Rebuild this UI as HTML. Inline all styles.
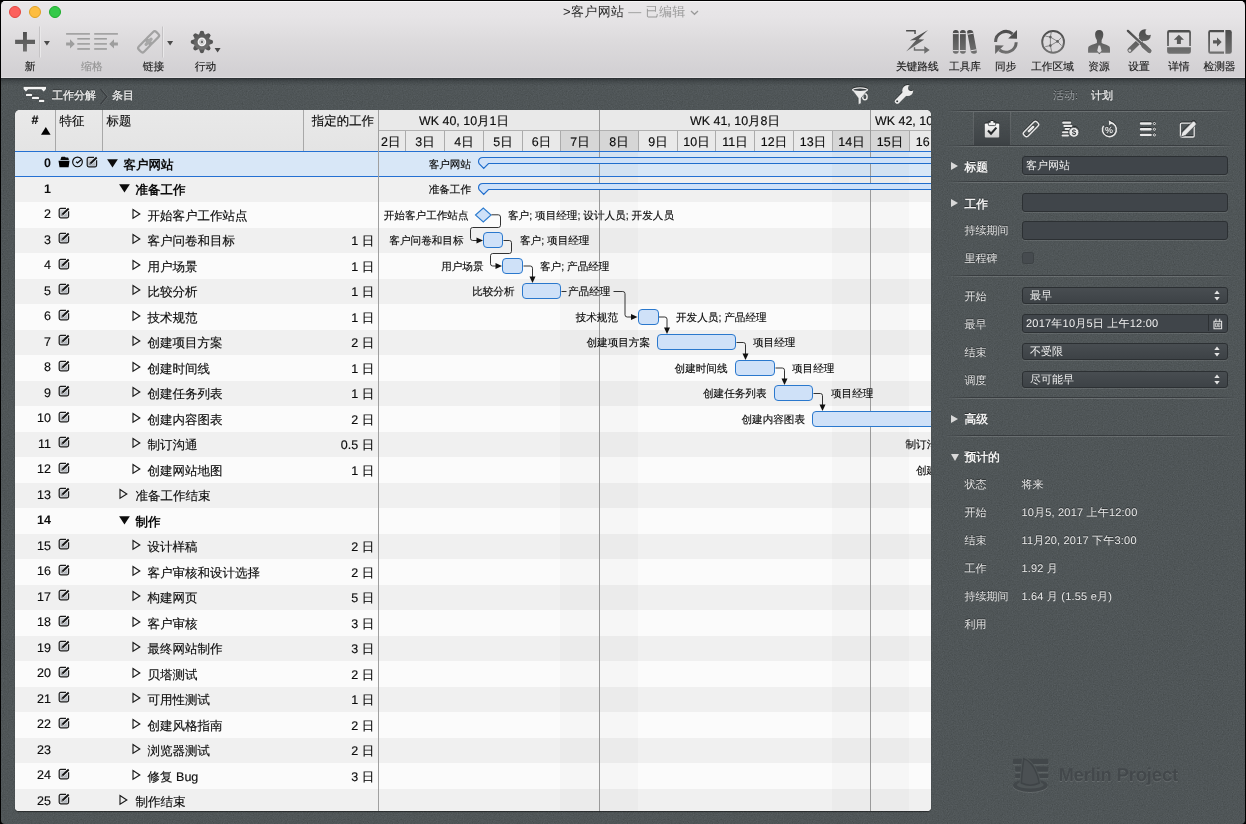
<!DOCTYPE html>
<html lang="zh"><head><meta charset="utf-8"><title>客户网站</title>
<style>
*{box-sizing:border-box;margin:0;padding:0}
html,body{width:1246px;height:824px;overflow:hidden;background:#000;font-family:"Liberation Sans",sans-serif;text-rendering:geometricPrecision;}
body{position:relative}
#win{position:absolute;left:1px;top:1px;width:1244px;height:823px;border-radius:4.5px 4.5px 4px 4px;overflow:hidden;background:#4f5557;}
#chrome{position:absolute;left:0;top:0;width:1244px;height:77px;background:linear-gradient(#e9e7e9 0%,#e6e4e6 22%,#dcdadc 55%,#d3d1d4 92%,#d3d1d4 100%);border-bottom:1px solid #dfdde0;box-shadow:inset 0 1px 0 #f6f5f6;}
#chromeline{position:absolute;left:0;top:77px;width:1244px;height:8px;background:linear-gradient(rgba(30,34,37,.8) 0,rgba(35,40,43,.55) 16%,rgba(40,45,48,.28) 45%,rgba(48,52,55,0) 100%)}
.tl{position:absolute;top:4px;width:12px;height:12px;border-radius:50%;}
#title{position:absolute;left:0;top:2.4px;letter-spacing:.35px;width:1244px;text-align:center;font-size:13px;color:#2b2b2b;white-space:nowrap;line-height:18px}
#title .ed{color:#9a9a9a}
.tb{position:absolute;top:0;font-size:10.7px;color:#2e2e2e;white-space:nowrap;text-align:center;line-height:12px}
.tb.dis{color:#9a9a9a}
.tbl{position:absolute;top:59px;transform:translateX(-50%);font-size:10.7px;color:#222;-webkit-text-stroke:.15px #222;white-space:nowrap;line-height:14px}
.tbl.dis{color:#939393;-webkit-text-stroke:.15px #939393}
.tbi{position:absolute}
.vdiv{position:absolute;top:26px;width:2px;height:30px;background:linear-gradient(90deg,#bdbbbd 50%,#efeeef 50%)}
.dd{position:absolute;width:0;height:0;border-left:3px solid transparent;border-right:3px solid transparent;border-top:5px solid #444}
/* crumbs */
#crumbs{position:absolute;left:0;top:78px;width:931px;height:31px;color:#f2f2f2;font-size:11px;text-shadow:0 -1px 0 rgba(0,0,0,.5)}
#crumbs span{position:absolute;top:9.7px;-webkit-text-stroke:.25px #f2f2f2;line-height:14px;white-space:nowrap}
/* panel */
#panel{position:absolute;left:14px;top:109px;width:916px;height:701px;background:#fafafa;border-radius:5px 5px 4px 4px;overflow:hidden;box-shadow:0 1px 1px rgba(0,0,0,.5)}
.rb{position:absolute;left:0;width:916px}
.rb.odd{background:#f0f0f0}
.rb.even{background:#fbfbfb}
.rb.sel{background:#d8e7f7;border-top:1px solid #2470d2;border-bottom:1px solid #2470d2}
#outline{position:absolute;left:0;top:0;width:364px;height:701px;border-right:1px solid #9f9f9f;}
.hdr{position:absolute;left:0;top:0;width:363px;height:41px;background:linear-gradient(#e9e9e9,#e4e4e4)}
.hc{position:absolute;top:0;height:41px;border-right:1px solid #a8a8a8;font-size:12.44px;color:#111}
.hc span{position:absolute;white-space:nowrap;line-height:16px;color:#0c0c0c;-webkit-text-stroke:.15px #0c0c0c}
.sortup{position:absolute;left:25.8px;top:17.5px;width:0;height:0;border-left:4.8px solid transparent;border-right:4.8px solid transparent;border-bottom:7.7px solid #000}
.row{position:absolute;left:0;width:363px;font-size:12.5px;color:#0c0c0c;white-space:nowrap;-webkit-text-stroke:.15px #0c0c0c}
.row.b{font-weight:bold;-webkit-text-stroke:0}
.row span{position:absolute;top:5px;line-height:16px}
.row .num{right:327px;text-align:right;top:3.7px}
.row .wk{right:3.8px;text-align:right;top:5px}
.row .ic{position:absolute;top:4.4px}
.tri-d{position:absolute;top:8px;width:0;height:0;border-left:4.7px solid transparent;border-right:4.7px solid transparent;border-top:7.8px solid #111}
.tri-r{position:absolute;top:5.3px}
.tri-dd{position:absolute;top:7.2px}
/* gantt */
#gantt{position:absolute;left:364px;top:0;width:552px;height:701px;overflow:hidden}
#gantt .wkrow{position:absolute;left:0;top:0;width:553px;height:21px;background:#e9e9e9;border-bottom:1px solid #b0b0b0;font-size:12.44px;color:#111}
#gantt .dayrow{position:absolute;left:0;top:21px;width:553px;height:20px;background:#e9e9e9;font-size:12.44px;color:#111}
#gantt .wkrow span,#gantt .dayrow span{position:absolute;top:2.5px;line-height:16px;white-space:nowrap;color:#0c0c0c;-webkit-text-stroke:.15px #0c0c0c}
.dc{position:absolute;top:0;height:20px;border-left:1px solid #ababab}
.dc.we{background:#d6d6d6}
.wshade{position:absolute;top:41px;height:660px;background:rgba(0,0,0,.021)}
.wline{position:absolute;top:0;width:1px;height:701px;background:#9a9a9a}
.gl{position:absolute;font-size:10.6px;color:#0c0c0c;-webkit-text-stroke:.15px #0c0c0c;white-space:nowrap;line-height:14px}
.gl.r{text-align:right;transform:translateX(-100%)}
.bar{position:absolute;height:16px;background:#cfe1f8;border:1px solid #2a78cd;border-radius:4px}
#gsvg{position:absolute;left:0;top:0}
/* inspector */
#insp{position:absolute;left:931px;top:78px;width:313px;height:745px;color:#e8e8e8;font-size:11px}
#insp .lb{position:absolute;left:32.4px;line-height:14px;white-space:nowrap;color:#e4e4e4;text-shadow:0 -1px 0 rgba(0,0,0,.45)}
#insp .lb.h{font-weight:bold;font-size:11.8px;color:#f2f2f2}
#insp .val{position:absolute;left:89.4px;letter-spacing:.2px;line-height:14px;white-space:nowrap;color:#e9e9e9;text-shadow:0 -1px 0 rgba(0,0,0,.45)}
#insp .sep{position:absolute;left:13px;width:292px;height:1px;background:linear-gradient(90deg,rgba(56,60,63,0),#383c3f 9%,#383c3f 91%,rgba(56,60,63,0))}
#insp .sep:after{content:'';position:absolute;left:0;top:1px;width:292px;height:1px;background:linear-gradient(90deg,rgba(255,255,255,0),rgba(255,255,255,.15) 9%,rgba(255,255,255,.15) 91%,rgba(255,255,255,0))}
#insp .fld{position:absolute;left:90px;width:206px;height:18.5px;background:#40454a;border:1px solid #2c3033;border-radius:3px;box-shadow:0 1px 0 rgba(255,255,255,.1);font-size:11px;color:#f0f0f0;line-height:18.5px;padding-left:3px;white-space:nowrap}
#insp .fld.selb{padding-left:7px;background:linear-gradient(#484d51,#3d4246);height:17.2px;line-height:16.4px}
.tr-r{position:absolute;left:19px;width:0;height:0;border-top:4px solid transparent;border-bottom:4px solid transparent;border-left:7px solid #d9d9d9}
.tr-d{position:absolute;left:19px;width:0;height:0;border-left:4.5px solid transparent;border-right:4.5px solid transparent;border-top:7px solid #d9d9d9}
.stp{position:absolute;right:7.5px;top:2.3px}

#noise{position:absolute;left:0;top:77px;width:1244px;height:746px;opacity:.14;mix-blend-mode:overlay;pointer-events:none}

</style></head>
<body>
<svg width="0" height="0" style="position:absolute">
<defs>
<linearGradient id="gdk" gradientUnits="userSpaceOnUse" x1="0" y1="29" x2="0" y2="55"><stop offset="0" stop-color="#4a4a4a"/><stop offset="1" stop-color="#747474"/></linearGradient>
<linearGradient id="gdk2" gradientUnits="userSpaceOnUse" x1="0" y1="-12" x2="0" y2="12"><stop offset="0" stop-color="#515151"/><stop offset="1" stop-color="#7a7a7a"/></linearGradient>
<linearGradient id="glt" x1="0" y1="0" x2="0" y2="1"><stop offset="0" stop-color="#9a9a9a"/><stop offset="1" stop-color="#b4b4b4"/></linearGradient>
<linearGradient id="gclip" x1="0" y1="0" x2="0" y2="1"><stop offset="0" stop-color="#fbfbfb"/><stop offset="1" stop-color="#cfcfcf"/></linearGradient>
<linearGradient id="ged" x1="0" y1="0" x2="0" y2="1"><stop offset="0" stop-color="#d6d8db"/><stop offset="1" stop-color="#a9aeb5"/></linearGradient>
<symbol id="i-edit" viewBox="0 0 13 13">
<path d="M2.2 2.4h5.6L3.6 7.2l-.6 2.2 2.3-.6L9.6 4.4v5.4H2.2z" fill="url(#ged)"/>
<path d="M8 1.4H2.7a1.5 1.5 0 0 0-1.5 1.5v6.4a1.5 1.5 0 0 0 1.5 1.5h6.4a1.5 1.5 0 0 0 1.5-1.5V4.3" fill="none" stroke="#1a1a1a" stroke-width="1.2"/>
<path d="M4.4 7.5 L10.7 1.5" stroke="#111" stroke-width="1.85" fill="none"/><path d="M3.3 8.7l.5-1.7 1.3 1.3z" fill="#111"/>
</symbol>
<symbol id="i-folder" viewBox="0 0 13 13">
<path d="M2.4 3.9 L3.3 1.1 Q3.5 .7 4 .7 L7 .7 L7.7 1.5 L9.8 1.5 Q10.3 1.5 10.4 2 L10.9 3.9 Z" fill="#0a0a0a"/>
<path d="M0.5 4.8 L11.5 4.8 L10.6 11.3 L1.5 11.3 Z" fill="#000"/>
</symbol>
<symbol id="i-clock" viewBox="0 0 13 13">
<circle cx="6.5" cy="5.9" r="4.85" fill="none" stroke="#0c0c0c" stroke-width="1.15"/>
<path d="M5.1 5.8 L6.5 7 L9.9 3.9" fill="none" stroke="#0c0c0c" stroke-width="1.3"/>
</symbol>
<symbol id="t-clip" viewBox="0 0 20 20"><rect x="2.8" y="4.6" width="14.4" height="14" rx="1" fill="url(#gclip)"/><rect x="6.4" y="3.4" width="7.2" height="3.2" rx=".8" fill="#eee" stroke="#454a4d" stroke-width=".9"/><rect x="8.5" y="1.9" width="3" height="2.4" rx=".9" fill="#eee"/><path d="M6 11.6 L9 14.6 L14.4 8.6" fill="none" stroke="#26292b" stroke-width="2.1"/></symbol>
<symbol id="t-link" viewBox="0 0 20 20"><g transform="translate(10 10) rotate(-45)" fill="none" stroke="#e8e8e8" stroke-width="1.45"><rect x="-9.2" y="-2.9" width="18.4" height="5.8" rx="2.2"/><path d="M-3 0h6" stroke-width="2.4" stroke-linecap="round"/></g></symbol>
<symbol id="t-cost" viewBox="0 0 20 20"><g fill="#e8e8e8"><rect x="2.2" y="2.6" width="9" height="2.1" rx="1"/><rect x="3.4" y="5.8" width="9" height="2.1" rx="1"/><rect x="4.6" y="9" width="5.6" height="2.1" rx="1"/><rect x="2" y="12.2" width="6.6" height="2.1" rx="1"/><rect x="1.6" y="15.4" width="7.4" height="2.1" rx="1"/><circle cx="13.9" cy="13.3" r="5" stroke="#4c5154" stroke-width=".9"/></g><text x="13.9" y="16.3" font-family="Liberation Sans" font-size="8" font-weight="bold" text-anchor="middle" fill="#3a3e41">$</text></symbol>
<symbol id="t-pct" viewBox="0 0 20 20"><path d="M11.2 3.6 A7 7 0 1 1 4.6 6.6" fill="none" stroke="#e8e8e8" stroke-width="1.6"/><path d="M9.8 1.2 L13.6 3.5 L10.2 6.2z" fill="#e8e8e8"/><text x="10.1" y="13.9" font-family="Liberation Sans" font-size="9" font-weight="bold" text-anchor="middle" fill="#e8e8e8">%</text></symbol>
<symbol id="t-list" viewBox="0 0 20 20"><g fill="#e8e8e8"><rect x="1.8" y="3.3" width="12" height="2.4" rx="1.1"/><rect x="1.8" y="9" width="12" height="2.4" rx="1.1"/><rect x="1.8" y="14.7" width="12" height="2.4" rx="1.1"/></g><g fill="none" stroke="#e8e8e8" stroke-width=".9"><circle cx="16.4" cy="4.5" r="1.1"/><circle cx="16.4" cy="10.2" r="1.1"/><circle cx="16.4" cy="15.9" r="1.1"/></g></symbol>
<symbol id="t-note" viewBox="0 0 20 20"><rect x="3.4" y="4.2" width="13.8" height="13.8" rx="1.2" fill="none" stroke="#e8e8e8" stroke-width="1.3"/><path d="M3.6 18.2 L5.2 13.2 L15.8 2.6 Q16.6 2 17.4 2.6 L19 4.2 Q19.6 5 19 5.8 L8.4 16.4 Z" fill="#e8e8e8" stroke="#4c5154" stroke-width=".8"/></symbol>
</defs>
</svg>
<div id="win">
<svg id="noise" width="1244" height="746"><filter id="nf" color-interpolation-filters="sRGB" x="0" y="0" width="100%" height="100%"><feTurbulence type="fractalNoise" baseFrequency="0.8" numOctaves="2" seed="7"/><feColorMatrix type="matrix" values="0.6 0.6 0.6 0 -0.4  0.6 0.6 0.6 0 -0.4  0.6 0.6 0.6 0 -0.4  0 0 0 0 1"/></filter><rect width="1244" height="746" filter="url(#nf)"/></svg>
<div id="chrome">
<div class="tl" style="left:8px;top:5px;background:#fc615d;border:1px solid #e24640"></div>
<div class="tl" style="left:28px;top:5px;background:#fdbd41;border:1px solid #dfa023"></div>
<div class="tl" style="left:48px;top:5px;background:#35c94a;border:1px solid #1dac2b"></div>
<div id="title"><span style="position:absolute;left:562px;top:0">&gt;客户网站 <span class="ed">— 已编辑</span></span>
<svg style="position:absolute;left:688.6px;top:7px" width="9" height="6"><path d="M1 1 L4.5 4.3 L8 1" fill="none" stroke="#9a9a9a" stroke-width="1.3"/></svg></div>
<span class="tbl" style="left:29px">新</span>
<span class="tbl dis" style="left:91px">缩格</span>
<span class="tbl" style="left:152.5px">链接</span>
<span class="tbl" style="left:204.5px">行动</span>
<span class="tbl" style="left:916.3px">关键路线</span>
<span class="tbl" style="left:964px">工具库</span>
<span class="tbl" style="left:1004.8px">同步</span>
<span class="tbl" style="left:1051.5px">工作区域</span>
<span class="tbl" style="left:1097.9px">资源</span>
<span class="tbl" style="left:1138px">设置</span>
<span class="tbl" style="left:1178px">详情</span>
<span class="tbl" style="left:1218.5px">检测器</span>
<!-- all toolbar icons, drawn in page coordinates -->
<svg id="tbsvg" style="position:absolute;left:-1px;top:-1px" width="1246" height="78">
<g fill="url(#gdk)">
<!-- plus -->
<path d="M23 32.1h3.9v7.7h8.1v4.1h-8.1v7.7h-3.9v-7.7h-7.9v-4.1h7.9z"/>
<!-- dropdown arrows -->
<path d="M43.9 41h6l-3 4.5z M167.1 41h6l-3 4.5z M214.6 47.9h6l-3 4.5z" fill="#4a4a4a"/>
</g>
<!-- dividers -->
<rect x="39" y="26.5" width="1" height="31" fill="#c5c3c5"/><rect x="40" y="26.5" width="1" height="31" fill="#e9e8e9"/>
<rect x="162" y="26.5" width="1" height="31" fill="#c5c3c5"/><rect x="163" y="26.5" width="1" height="31" fill="#e9e8e9"/>
<!-- indent / outdent (disabled) -->
<g fill="#9e9e9e">
<rect x="66.1" y="33.1" width="23.8" height="1.6"/><rect x="77.3" y="38" width="12.6" height="1.6"/><rect x="77.3" y="43.1" width="12.6" height="1.6"/><rect x="77.3" y="48.1" width="12.6" height="1.7"/>
<path d="M66.1 42.5h3.9v-3.3l4.8 4.7-4.8 4.7v-3.2h-3.9z"/>
<rect x="94.2" y="33.1" width="23.7" height="1.6"/><rect x="94.2" y="38" width="12.7" height="1.6"/><rect x="94.2" y="43.1" width="12.7" height="1.6"/><rect x="94.2" y="48.1" width="12.7" height="1.7"/>
<path d="M117.9 42.5h-3.9v-3.3l-4.8 4.7 4.8 4.7v-3.2h3.9z"/>
</g>
<!-- link -->
<g transform="translate(148.6 41.8) rotate(-45.5)" fill="none" stroke="#a2a2a2" stroke-width="2.2">
<rect x="-12.4" y="-3.7" width="13.4" height="7.4" rx="2.2"/><rect x="-1" y="-3.7" width="13.4" height="7.4" rx="2.2"/>
<path d="M-3.6 0h7.2" stroke-width="3.2" stroke-linecap="round" stroke="#a8a8a8"/></g>
<!-- gear -->
<g transform="translate(201.9 41.9)" fill="url(#gdk2)">
<g id="tooth"><path d="M-3 -6.8 L-1.7 -10.6 Q0 -11.9 1.7 -10.6 L3 -6.8 Z"/></g>
<use href="#tooth" transform="rotate(45)"/><use href="#tooth" transform="rotate(90)"/><use href="#tooth" transform="rotate(135)"/><use href="#tooth" transform="rotate(180)"/><use href="#tooth" transform="rotate(225)"/><use href="#tooth" transform="rotate(270)"/><use href="#tooth" transform="rotate(315)"/>
<circle r="7.9"/><circle r="4.3" fill="#f3f2f3"/><circle r="2.4" fill="none" stroke="#b5b5b5" stroke-width=".8"/><circle r="1.3" fill="#6a6a6a"/></g>

<!-- critical path -->
<g fill="url(#gdk)">
<path d="M906.1 30.1h9.7v4h-1.5v-2.5h-8.2z"/>
<path d="M928 30.1 L909.8 40.5 L916.2 40 L906.1 51.6 L924.3 39.5 L918.5 39.2 Z"/>
<path d="M913.8 47.3h1.4v2h9.1v-3l5.4 3.7-5.4 3.7v-2.9h-10.5z"/>
</g>
<!-- library -->
<g fill="url(#gdk)">
<rect x="952.9" y="30.1" width="5.8" height="23.6" rx="2.6"/><rect x="960" y="30.1" width="5.8" height="23.6" rx="2.6"/>
<path d="M967.2 32.3 Q966.8 30.4 969.5 30.1 Q972.6 29.9 973.1 31.8 L976.8 51.4 Q977.2 53.4 974.4 53.7 Q971.4 54 970.9 52 Z"/></g>
<g stroke="#e4e2e4" stroke-width="1" fill="none"><path d="M952.9 33.6h5.8 M960 33.6h5.8 M952.9 50.6h5.8 M960 50.6h5.8 M967.6 34.2l5.9-1 M970.6 50.8l5.9-1"/></g>
<!-- sync -->
<g fill="none" stroke="url(#gdk)" stroke-width="3">
<path d="M995.6 41.9 A10.3 10.3 0 0 1 1012.5 33.9"/>
<path d="M1016.2 42.2 A10.3 10.3 0 0 1 999.5 50"/></g>
<path d="M1017 30.1v8.7l-8.8-.3z" fill="#4e4e4e"/><path d="M995.1 54v-8.8l8.7.4z" fill="#676767"/>
<!-- workspace -->
<circle cx="1053.1" cy="41.9" r="10.9" fill="none" stroke="url(#gdk)" stroke-width="1.9"/>
<g stroke="#707070" stroke-width=".8" fill="none"><path d="M1050.4 37.1 L1057.5 41.4 L1050.4 45.6 Z M1050.4 37.1 L1051.4 31.4 M1050.4 37.1 L1045.3 36.1 M1057.5 41.4 L1061.5 37.5 M1057.5 41.4 L1061.5 45.6 M1050.4 45.6 L1045.3 46.6 M1050.4 45.6 L1051.7 52"/></g>
<g fill="#5e5e5e"><circle cx="1050.4" cy="37.1" r="1.3"/><circle cx="1057.5" cy="41.4" r="1.3"/><circle cx="1050.4" cy="45.6" r="1.3"/></g>
<!-- resource person -->
<path d="M1099.2 29.9 C1102 29.9 1103.4 31.8 1103.3 34.6 C1103.2 37.4 1102.2 39 1101.6 40.2 L1101.6 43 C1104.5 44.2 1108.4 45.4 1109.4 46.6 C1110.2 47.6 1110 50.5 1110 52.7 L1088.1 52.7 C1088.1 50.5 1087.9 47.6 1088.7 46.6 C1089.7 45.4 1093.6 44.2 1096.9 43 L1096.9 40.2 C1096.2 39 1095.2 37.4 1095.1 34.6 C1095 31.8 1096.4 29.9 1099.2 29.9 Z" fill="url(#gdk)"/>
<path d="M1098.5 45.6h1.7l1.4 5.1-2.2 2.5-2.2-2.5z" fill="#dcdadc"/><path d="M1097.9 52.7h2.9l-1.45 1.6z" fill="#555"/>
<!-- settings tools -->
<mask id="wm" maskUnits="userSpaceOnUse" x="1120" y="25" width="40" height="35"><rect x="1120" y="25" width="40" height="35" fill="#fff"/><circle cx="1148.7" cy="32" r="3.3" fill="#000"/><circle cx="1129.8" cy="50.4" r="1.25" fill="#000"/></mask>
<g mask="url(#wm)"><circle cx="1144.8" cy="35.2" r="5.9" fill="url(#gdk)"/><path d="M1130 50.2 L1142.6 38" stroke="url(#gdk)" stroke-width="5.2" stroke-linecap="round" fill="none"/></g>
<g fill="none" stroke="#dedcde" stroke-linecap="round"><path d="M1127.9 30.9 L1141.5 43.6" stroke-width="3.8"/><path d="M1143.6 45.7 L1149.3 50.9" stroke-width="6.2"/></g>
<g fill="none" stroke="url(#gdk)" stroke-linecap="round"><path d="M1127.9 30.9 L1141.5 43.6" stroke-width="2.3"/><path d="M1141 43.1 L1143 45" stroke-width="3.4" stroke-linecap="butt"/><path d="M1143.6 45.7 L1149.3 50.9" stroke-width="4.6"/></g>
<!-- details -->
<path fill-rule="evenodd" fill="url(#gdk)" d="M1169.3 30.1h19.4a2.2 2.2 0 0 1 2.2 2.2v13.6h-23.8v-13.6a2.2 2.2 0 0 1 2.2-2.2z M1168.9 32.4v13.5h20.3v-13.5z"/>
<path fill="url(#gdk)" d="M1167.1 47.3h23.8v4.2a2.2 2.2 0 0 1-2.2 2.2h-19.4a2.2 2.2 0 0 1-2.2-2.2z"/>
<path d="M1178.9 34.8l5.1 5h-3.1v4.1h-4v-4.1h-3.1z" fill="#5a5a5a"/>
<!-- inspector -->
<path fill="url(#gdk)" d="M1225.4 30.1h4.2a2.2 2.2 0 0 1 2.2 2.2v19.2a2.2 2.2 0 0 1-2.2 2.2h-4.2z"/>
<path fill-rule="evenodd" fill="url(#gdk)" d="M1210.4 30.1h13.6v23.6h-13.6a2.2 2.2 0 0 1-2.2-2.2v-19.2a2.2 2.2 0 0 1 2.2-2.2z M1210 32.3v19.3h14v-19.3z"/>
<path d="M1213 40.2h4v-2.7l4.7 4.4-4.7 4.7v-3h-4z" fill="#5a5a5a"/>
</svg>
</div>
<div id="chromeline"></div>
<div id="crumbs">
<svg style="position:absolute;left:22px;top:7px;filter:drop-shadow(0 -1px 0 rgba(0,0,0,.45))" width="24" height="17" fill="#f4f4f4">
<path d="M0.6 0.8h22.4v2.3l-2.3 2.5-2.3-2.4h-13.2l-2.3 2.4-2.3-2.5z"/>
<rect x="3" y="7.8" width="6" height="2.2" rx=".6"/><rect x="9" y="10.8" width="7" height="2.2" rx=".6"/><rect x="16" y="13.8" width="5.2" height="2.2" rx=".6"/></svg>
<span style="left:51px">工作分解</span>
<svg style="position:absolute;left:98px;top:9px" width="10" height="18"><path d="M1.5 1 L8 8.7 L1.5 16.4" fill="none" stroke="#383c3f" stroke-width="1.3"/><path d="M2.6 1 L9.1 8.7 L2.6 16.4" fill="none" stroke="rgba(255,255,255,.13)" stroke-width="1"/></svg>
<span style="left:111px">条目</span>
<svg id="funnel" style="position:absolute;left:850px;top:8px;filter:drop-shadow(0 -1px 0 rgba(0,0,0,.45))" width="19" height="19">
<ellipse cx="13.9" cy="9.7" rx="2.2" ry="3" fill="none" stroke="#e9e9e9" stroke-width="1.5"/>
<path d="M1 2.8 L7.2 11 L7.3 17.6 L10.1 16.4 L10.2 11 L17.1 2.8 Z" fill="#eaeaea" stroke="#4f5558" stroke-width=".6"/>
<ellipse cx="9.05" cy="2.7" rx="8.1" ry="2.5" fill="#eaeaea"/>
<ellipse cx="9.05" cy="2.75" rx="6.6" ry="1.15" fill="#3f4447"/>
</svg>
<svg id="wrench" style="position:absolute;left:893px;top:6px;filter:drop-shadow(0 -1px 0 rgba(0,0,0,.45))" width="21" height="21">
<mask id="wm2" maskUnits="userSpaceOnUse" x="0" y="0" width="21" height="21"><rect width="21" height="21" fill="#fff"/><circle cx="17.1" cy="2.9" r="3" fill="#000"/><circle cx="3.2" cy="16.3" r="1" fill="#000"/></mask>
<g mask="url(#wm2)"><circle cx="13.7" cy="5.6" r="5.5" fill="#ececec"/><path d="M3.3 16.2 L12 7.4" stroke="#ececec" stroke-width="5" stroke-linecap="round" fill="none"/></g></svg>
</div>
<div id="panel">
<div class="rb sel" style="top:41px;height:26px"></div>
<div class="rb odd" style="top:67px;height:25px"></div>
<div class="rb even" style="top:92px;height:26px"></div>
<div class="rb odd" style="top:118px;height:25px"></div>
<div class="rb even" style="top:143px;height:26px"></div>
<div class="rb odd" style="top:169px;height:25px"></div>
<div class="rb even" style="top:194px;height:26px"></div>
<div class="rb odd" style="top:220px;height:25px"></div>
<div class="rb even" style="top:245px;height:26px"></div>
<div class="rb odd" style="top:271px;height:25px"></div>
<div class="rb even" style="top:296px;height:26px"></div>
<div class="rb odd" style="top:322px;height:25px"></div>
<div class="rb even" style="top:347px;height:26px"></div>
<div class="rb odd" style="top:373px;height:25px"></div>
<div class="rb even" style="top:398px;height:26px"></div>
<div class="rb odd" style="top:424px;height:25px"></div>
<div class="rb even" style="top:449px;height:26px"></div>
<div class="rb odd" style="top:475px;height:25px"></div>
<div class="rb even" style="top:500px;height:26px"></div>
<div class="rb odd" style="top:526px;height:25px"></div>
<div class="rb even" style="top:551px;height:26px"></div>
<div class="rb odd" style="top:577px;height:25px"></div>
<div class="rb even" style="top:602px;height:26px"></div>
<div class="rb odd" style="top:628px;height:25px"></div>
<div class="rb even" style="top:653px;height:26px"></div>
<div class="rb odd" style="top:679px;height:25px"></div>
<div id="gantt">
<div class="wkrow"><span style="left:40px">WK 40, 10月1日</span><span style="left:311px">WK 41, 10月8日</span><span style="left:496px">WK 42, 10月15日</span></div>
<div class="dayrow"><div class="dc" style="left:0px;width:26px;border-left:none"><span style="left:2px">2日</span></div><div class="dc" style="left:26px;width:39px"><span style="left:0;width:38px;text-align:center">3日</span></div><div class="dc" style="left:65px;width:39px"><span style="left:0;width:38px;text-align:center">4日</span></div><div class="dc" style="left:104px;width:39px"><span style="left:0;width:38px;text-align:center">5日</span></div><div class="dc" style="left:143px;width:38px"><span style="left:0;width:37px;text-align:center">6日</span></div><div class="dc we" style="left:181px;width:39px"><span style="left:0;width:38px;text-align:center">7日</span></div><div class="dc we" style="left:220px;width:39px"><span style="left:0;width:38px;text-align:center">8日</span></div><div class="dc" style="left:259px;width:39px"><span style="left:0;width:38px;text-align:center">9日</span></div><div class="dc" style="left:298px;width:38px"><span style="left:0;width:37px;text-align:center">10日</span></div><div class="dc" style="left:336px;width:39px"><span style="left:0;width:38px;text-align:center">11日</span></div><div class="dc" style="left:375px;width:39px"><span style="left:0;width:38px;text-align:center">12日</span></div><div class="dc" style="left:414px;width:39px"><span style="left:0;width:38px;text-align:center">13日</span></div><div class="dc we" style="left:453px;width:38px"><span style="left:0;width:37px;text-align:center">14日</span></div><div class="dc we" style="left:491px;width:39px"><span style="left:0;width:38px;text-align:center">15日</span></div><div class="dc" style="left:530px;width:39px"><span style="left:0;width:38px;text-align:center">16日</span></div></div>
<div class="wshade" style="left:181px;width:78px"></div><div class="wshade" style="left:453px;width:77px"></div><div class="wline" style="left:220px"></div><div class="wline" style="left:491px"></div>
<svg id="gsvg" width="553" height="701"><path d="M0 41.5H560 M0 66.5H560" stroke="#2470d2" stroke-width="1"/><path d="M99.5 52.0 Q99.5 47.5 104.0 47.5 L560 47.5 L560 53.5 L109.5 53.5 L104.7 58.5 L100.1 53.7 Z" fill="#cfe1f8" stroke="#1f6dcc" stroke-width="1.15"/><path d="M99.5 78.0 Q99.5 73.5 104.0 73.5 L560 73.5 L560 79.5 L109.5 79.5 L104.7 84.5 L100.1 79.7 Z" fill="#cfe1f8" stroke="#1f6dcc" stroke-width="1.15"/><path d="M96.5 105.0 L104.3 98.0 L112.1 105.0 L104.3 112.0 Z" fill="#cfe1f8" stroke="#2d7ccf" stroke-width="1.1"/><path d="M112.5 104.8 L119.3 104.8 Q121.5 104.8 121.5 107.0 L121.5 115.3 Q121.5 117.5 119.3 117.5 L93.7 117.5 Q91.5 117.5 91.5 119.7 L91.5 128.3 Q91.5 130.5 93.7 130.5 L98.5 130.5" fill="none" stroke="#333" stroke-width="1"/><path d="M104.0 130.5 l-6.5 -3 v6 z" fill="#111"/><path d="M124.5 130.5 L130.3 130.5 Q132.5 130.5 132.5 132.7 L132.5 141.3 Q132.5 143.5 130.3 143.5 L113.7 143.5 Q111.5 143.5 111.5 145.7 L111.5 153.8 Q111.5 156.0 113.7 156.0 L117.5 156.0" fill="none" stroke="#333" stroke-width="1"/><path d="M123.0 156.0 l-6.5 -3 v6 z" fill="#111"/><path d="M144.5 156.0 L151.3 156.0 Q153.5 156.0 153.5 158.2 L153.5 167.5" fill="none" stroke="#333" stroke-width="1"/><path d="M153.5 173.0 l-3 -6.5 h6 z" fill="#111"/><path d="M182.5 181.5 L187.5 181.5" fill="none" stroke="#333" stroke-width="1"/><path d="M234.5 181.5 L243.8 181.5 Q246.0 181.5 246.0 183.7 L246.0 204.8 Q246.0 207.0 248.2 207.0 L253.5 207.0" fill="none" stroke="#333" stroke-width="1"/><path d="M258.5 207.0 l-6.5 -3 v6 z" fill="#111"/><path d="M279.5 207.0 L285.8 207.0 Q288.0 207.0 288.0 209.2 L288.0 218.5" fill="none" stroke="#333" stroke-width="1"/><path d="M288.0 224.0 l-3 -6.5 h6 z" fill="#111"/><path d="M357.5 232.5 L364.3 232.5 Q366.5 232.5 366.5 234.7 L366.5 244.5" fill="none" stroke="#333" stroke-width="1"/><path d="M366.5 250.0 l-3 -6.5 h6 z" fill="#111"/><path d="M396.5 258.0 L403.3 258.0 Q405.5 258.0 405.5 260.2 L405.5 269.5" fill="none" stroke="#333" stroke-width="1"/><path d="M405.5 275.0 l-3 -6.5 h6 z" fill="#111"/><path d="M434.5 283.5 L441.3 283.5 Q443.5 283.5 443.5 285.7 L443.5 295.5" fill="none" stroke="#333" stroke-width="1"/><path d="M443.5 301.0 l-3 -6.5 h6 z" fill="#111"/></svg>
<div class="bar" style="left:104.0px;top:122px;width:20.0px"></div><div class="bar" style="left:123.0px;top:148px;width:21.0px"></div><div class="bar" style="left:143.0px;top:173px;width:39.0px"></div><div class="bar" style="left:258.5px;top:199px;width:21.0px"></div><div class="bar" style="left:278.0px;top:224px;width:79.0px"></div><div class="bar" style="left:356.0px;top:250px;width:40.0px"></div><div class="bar" style="left:395.0px;top:275px;width:39.0px"></div><div class="bar" style="left:433.0px;top:301px;width:128.0px"></div>
<span class="gl r" style="left:92.0px;top:47.5px">客户网站</span><span class="gl r" style="left:92.0px;top:73.0px">准备工作</span><span class="gl r" style="left:89.5px;top:98.5px">开始客户工作站点</span><span class="gl r" style="left:84.5px;top:124.0px">客户问卷和目标</span><span class="gl r" style="left:104.5px;top:149.5px">用户场景</span><span class="gl r" style="left:135.5px;top:175.0px">比较分析</span><span class="gl r" style="left:239.0px;top:200.5px">技术规范</span><span class="gl r" style="left:271.0px;top:226.0px">创建项目方案</span><span class="gl r" style="left:348.5px;top:251.5px">创建时间线</span><span class="gl r" style="left:387.5px;top:277.0px">创建任务列表</span><span class="gl r" style="left:426.0px;top:302.5px">创建内容图表</span><span class="gl" style="left:129.0px;top:98.5px">客户; 项目经理; 设计人员; 开发人员</span><span class="gl" style="left:141.0px;top:124.0px">客户; 项目经理</span><span class="gl" style="left:161.0px;top:149.5px">客户; 产品经理</span><span class="gl" style="left:189.0px;top:175.0px">产品经理</span><span class="gl" style="left:297.0px;top:200.5px">开发人员; 产品经理</span><span class="gl" style="left:374.0px;top:226.0px">项目经理</span><span class="gl" style="left:413.0px;top:251.5px">项目经理</span><span class="gl" style="left:452.0px;top:277.0px">项目经理</span><span class="gl" style="left:526.5px;top:328.0px">制订沟通</span><span class="gl" style="left:537.0px;top:353.5px">创建网站地图</span>
</div>
<div id="outline">
<div class="hdr"><div class="hc" style="left:0;width:41px"><span style="left:16.5px;top:2.2px;font-weight:bold;font-size:12.5px">#</span><svg style="position:absolute;left:25.7px;top:17.3px" width="10" height="8"><path d="M4.8 0.1 L9.6 7.8 H0 Z" fill="#000"/></svg></div><div class="hc" style="left:41px;width:47px"><span style="left:3.5px;top:2.8px">特征</span></div><div class="hc" style="left:88px;width:201px"><span style="left:3.5px;top:2.8px">标题</span></div><div class="hc" style="left:289px;width:74px;border-right:none"><span style="right:4px;top:2.8px">指定的工作</span></div></div>
<div class="row b" style="top:41.5px;height:25.5px"><span class="num">0</span><svg class="ic" style="left:42.9px" width="13" height="13"><use href="#i-folder"/></svg><svg class="ic" style="left:56.4px" width="13" height="13"><use href="#i-clock"/></svg><svg class="ic" style="left:70.8px" width="13" height="13"><use href="#i-edit"/></svg><svg class="tri-dd" style="left:92.1px" width="11" height="9"><path d="M0.1 0.2 H10.85 L5.47 8.6 Z" fill="#0c0c0c"/></svg><span class="ttl" style="left:108.6px">客户网站</span></div>
<div class="row b" style="top:67.0px;height:25.5px"><span class="num">1</span><svg class="tri-dd" style="left:104.1px" width="11" height="9"><path d="M0.1 0.2 H10.85 L5.47 8.6 Z" fill="#0c0c0c"/></svg><span class="ttl" style="left:120.6px">准备工作</span></div>
<div class="row" style="top:92.5px;height:25.5px"><span class="num">2</span><svg class="ic" style="left:42.9px" width="13" height="13"><use href="#i-edit"/></svg><svg class="tri-r" style="left:117px" width="10" height="12"><path d="M1 1.6 L7.8 5.9 L1 10.2 Z" fill="none" stroke="#1c1c1c" stroke-width="1.15"/></svg><span class="ttl" style="left:132.6px">开始客户工作站点</span></div>
<div class="row" style="top:118.0px;height:25.5px"><span class="num">3</span><svg class="ic" style="left:42.9px" width="13" height="13"><use href="#i-edit"/></svg><svg class="tri-r" style="left:117px" width="10" height="12"><path d="M1 1.6 L7.8 5.9 L1 10.2 Z" fill="none" stroke="#1c1c1c" stroke-width="1.15"/></svg><span class="ttl" style="left:132.6px">客户问卷和目标</span><span class="wk">1 日</span></div>
<div class="row" style="top:143.5px;height:25.5px"><span class="num">4</span><svg class="ic" style="left:42.9px" width="13" height="13"><use href="#i-edit"/></svg><svg class="tri-r" style="left:117px" width="10" height="12"><path d="M1 1.6 L7.8 5.9 L1 10.2 Z" fill="none" stroke="#1c1c1c" stroke-width="1.15"/></svg><span class="ttl" style="left:132.6px">用户场景</span><span class="wk">1 日</span></div>
<div class="row" style="top:169.0px;height:25.5px"><span class="num">5</span><svg class="ic" style="left:42.9px" width="13" height="13"><use href="#i-edit"/></svg><svg class="tri-r" style="left:117px" width="10" height="12"><path d="M1 1.6 L7.8 5.9 L1 10.2 Z" fill="none" stroke="#1c1c1c" stroke-width="1.15"/></svg><span class="ttl" style="left:132.6px">比较分析</span><span class="wk">1 日</span></div>
<div class="row" style="top:194.5px;height:25.5px"><span class="num">6</span><svg class="ic" style="left:42.9px" width="13" height="13"><use href="#i-edit"/></svg><svg class="tri-r" style="left:117px" width="10" height="12"><path d="M1 1.6 L7.8 5.9 L1 10.2 Z" fill="none" stroke="#1c1c1c" stroke-width="1.15"/></svg><span class="ttl" style="left:132.6px">技术规范</span><span class="wk">1 日</span></div>
<div class="row" style="top:220.0px;height:25.5px"><span class="num">7</span><svg class="ic" style="left:42.9px" width="13" height="13"><use href="#i-edit"/></svg><svg class="tri-r" style="left:117px" width="10" height="12"><path d="M1 1.6 L7.8 5.9 L1 10.2 Z" fill="none" stroke="#1c1c1c" stroke-width="1.15"/></svg><span class="ttl" style="left:132.6px">创建项目方案</span><span class="wk">2 日</span></div>
<div class="row" style="top:245.5px;height:25.5px"><span class="num">8</span><svg class="ic" style="left:42.9px" width="13" height="13"><use href="#i-edit"/></svg><svg class="tri-r" style="left:117px" width="10" height="12"><path d="M1 1.6 L7.8 5.9 L1 10.2 Z" fill="none" stroke="#1c1c1c" stroke-width="1.15"/></svg><span class="ttl" style="left:132.6px">创建时间线</span><span class="wk">1 日</span></div>
<div class="row" style="top:271.0px;height:25.5px"><span class="num">9</span><svg class="ic" style="left:42.9px" width="13" height="13"><use href="#i-edit"/></svg><svg class="tri-r" style="left:117px" width="10" height="12"><path d="M1 1.6 L7.8 5.9 L1 10.2 Z" fill="none" stroke="#1c1c1c" stroke-width="1.15"/></svg><span class="ttl" style="left:132.6px">创建任务列表</span><span class="wk">1 日</span></div>
<div class="row" style="top:296.5px;height:25.5px"><span class="num">10</span><svg class="ic" style="left:42.9px" width="13" height="13"><use href="#i-edit"/></svg><svg class="tri-r" style="left:117px" width="10" height="12"><path d="M1 1.6 L7.8 5.9 L1 10.2 Z" fill="none" stroke="#1c1c1c" stroke-width="1.15"/></svg><span class="ttl" style="left:132.6px">创建内容图表</span><span class="wk">2 日</span></div>
<div class="row" style="top:322.0px;height:25.5px"><span class="num">11</span><svg class="ic" style="left:42.9px" width="13" height="13"><use href="#i-edit"/></svg><svg class="tri-r" style="left:117px" width="10" height="12"><path d="M1 1.6 L7.8 5.9 L1 10.2 Z" fill="none" stroke="#1c1c1c" stroke-width="1.15"/></svg><span class="ttl" style="left:132.6px">制订沟通</span><span class="wk">0.5 日</span></div>
<div class="row" style="top:347.5px;height:25.5px"><span class="num">12</span><svg class="ic" style="left:42.9px" width="13" height="13"><use href="#i-edit"/></svg><svg class="tri-r" style="left:117px" width="10" height="12"><path d="M1 1.6 L7.8 5.9 L1 10.2 Z" fill="none" stroke="#1c1c1c" stroke-width="1.15"/></svg><span class="ttl" style="left:132.6px">创建网站地图</span><span class="wk">1 日</span></div>
<div class="row" style="top:373.0px;height:25.5px"><span class="num">13</span><svg class="ic" style="left:42.9px" width="13" height="13"><use href="#i-edit"/></svg><svg class="tri-r" style="left:104px" width="10" height="12"><path d="M1 1.6 L7.8 5.9 L1 10.2 Z" fill="none" stroke="#1c1c1c" stroke-width="1.15"/></svg><span class="ttl" style="left:120.6px">准备工作结束</span></div>
<div class="row b" style="top:398.5px;height:25.5px"><span class="num">14</span><svg class="tri-dd" style="left:104.1px" width="11" height="9"><path d="M0.1 0.2 H10.85 L5.47 8.6 Z" fill="#0c0c0c"/></svg><span class="ttl" style="left:120.6px">制作</span></div>
<div class="row" style="top:424.0px;height:25.5px"><span class="num">15</span><svg class="ic" style="left:42.9px" width="13" height="13"><use href="#i-edit"/></svg><svg class="tri-r" style="left:117px" width="10" height="12"><path d="M1 1.6 L7.8 5.9 L1 10.2 Z" fill="none" stroke="#1c1c1c" stroke-width="1.15"/></svg><span class="ttl" style="left:132.6px">设计样稿</span><span class="wk">2 日</span></div>
<div class="row" style="top:449.5px;height:25.5px"><span class="num">16</span><svg class="ic" style="left:42.9px" width="13" height="13"><use href="#i-edit"/></svg><svg class="tri-r" style="left:117px" width="10" height="12"><path d="M1 1.6 L7.8 5.9 L1 10.2 Z" fill="none" stroke="#1c1c1c" stroke-width="1.15"/></svg><span class="ttl" style="left:132.6px">客户审核和设计选择</span><span class="wk">2 日</span></div>
<div class="row" style="top:475.0px;height:25.5px"><span class="num">17</span><svg class="ic" style="left:42.9px" width="13" height="13"><use href="#i-edit"/></svg><svg class="tri-r" style="left:117px" width="10" height="12"><path d="M1 1.6 L7.8 5.9 L1 10.2 Z" fill="none" stroke="#1c1c1c" stroke-width="1.15"/></svg><span class="ttl" style="left:132.6px">构建网页</span><span class="wk">5 日</span></div>
<div class="row" style="top:500.5px;height:25.5px"><span class="num">18</span><svg class="ic" style="left:42.9px" width="13" height="13"><use href="#i-edit"/></svg><svg class="tri-r" style="left:117px" width="10" height="12"><path d="M1 1.6 L7.8 5.9 L1 10.2 Z" fill="none" stroke="#1c1c1c" stroke-width="1.15"/></svg><span class="ttl" style="left:132.6px">客户审核</span><span class="wk">3 日</span></div>
<div class="row" style="top:526.0px;height:25.5px"><span class="num">19</span><svg class="ic" style="left:42.9px" width="13" height="13"><use href="#i-edit"/></svg><svg class="tri-r" style="left:117px" width="10" height="12"><path d="M1 1.6 L7.8 5.9 L1 10.2 Z" fill="none" stroke="#1c1c1c" stroke-width="1.15"/></svg><span class="ttl" style="left:132.6px">最终网站制作</span><span class="wk">3 日</span></div>
<div class="row" style="top:551.5px;height:25.5px"><span class="num">20</span><svg class="ic" style="left:42.9px" width="13" height="13"><use href="#i-edit"/></svg><svg class="tri-r" style="left:117px" width="10" height="12"><path d="M1 1.6 L7.8 5.9 L1 10.2 Z" fill="none" stroke="#1c1c1c" stroke-width="1.15"/></svg><span class="ttl" style="left:132.6px">贝塔测试</span><span class="wk">2 日</span></div>
<div class="row" style="top:577.0px;height:25.5px"><span class="num">21</span><svg class="ic" style="left:42.9px" width="13" height="13"><use href="#i-edit"/></svg><svg class="tri-r" style="left:117px" width="10" height="12"><path d="M1 1.6 L7.8 5.9 L1 10.2 Z" fill="none" stroke="#1c1c1c" stroke-width="1.15"/></svg><span class="ttl" style="left:132.6px">可用性测试</span><span class="wk">1 日</span></div>
<div class="row" style="top:602.5px;height:25.5px"><span class="num">22</span><svg class="ic" style="left:42.9px" width="13" height="13"><use href="#i-edit"/></svg><svg class="tri-r" style="left:117px" width="10" height="12"><path d="M1 1.6 L7.8 5.9 L1 10.2 Z" fill="none" stroke="#1c1c1c" stroke-width="1.15"/></svg><span class="ttl" style="left:132.6px">创建风格指南</span><span class="wk">2 日</span></div>
<div class="row" style="top:628.0px;height:25.5px"><span class="num">23</span><svg class="tri-r" style="left:117px" width="10" height="12"><path d="M1 1.6 L7.8 5.9 L1 10.2 Z" fill="none" stroke="#1c1c1c" stroke-width="1.15"/></svg><span class="ttl" style="left:132.6px">浏览器测试</span><span class="wk">2 日</span></div>
<div class="row" style="top:653.5px;height:25.5px"><span class="num">24</span><svg class="ic" style="left:42.9px" width="13" height="13"><use href="#i-edit"/></svg><svg class="tri-r" style="left:117px" width="10" height="12"><path d="M1 1.6 L7.8 5.9 L1 10.2 Z" fill="none" stroke="#1c1c1c" stroke-width="1.15"/></svg><span class="ttl" style="left:132.6px">修复 Bug</span><span class="wk">3 日</span></div>
<div class="row" style="top:679.0px;height:25.5px"><span class="num">25</span><svg class="ic" style="left:42.9px" width="13" height="13"><use href="#i-edit"/></svg><svg class="tri-r" style="left:104px" width="10" height="12"><path d="M1 1.6 L7.8 5.9 L1 10.2 Z" fill="none" stroke="#1c1c1c" stroke-width="1.15"/></svg><span class="ttl" style="left:120.6px">制作结束</span></div>
</div>
</div>
<div id="insp">
<span class="lb" style="left:121px;top:10px;color:#9a9fa2">活动:</span><span class="lb" style="left:159px;top:10px;-webkit-text-stroke:.2px #f0f0f0;color:#f0f0f0">计划</span>
<div class="sep" style="top:31px"></div>
<div style="position:absolute;left:41px;top:33px;width:38px;height:33px;background:linear-gradient(rgba(62,66,69,.15),#404548 85%,#3c4144);border-left:1px solid rgba(255,255,255,.13);border-right:1px solid rgba(255,255,255,.13)"></div>
<svg class="tab" style="position:absolute;left:50.0px;top:40px;filter:drop-shadow(0 -1px 0 rgba(0,0,0,.5))" width="20" height="20"><use href="#t-clip"/></svg>
<svg class="tab" style="position:absolute;left:89.0px;top:40px;filter:drop-shadow(0 -1px 0 rgba(0,0,0,.5))" width="20" height="20"><use href="#t-link"/></svg>
<svg class="tab" style="position:absolute;left:127.5px;top:40px;filter:drop-shadow(0 -1px 0 rgba(0,0,0,.5))" width="20" height="20"><use href="#t-cost"/></svg>
<svg class="tab" style="position:absolute;left:167.0px;top:40px;filter:drop-shadow(0 -1px 0 rgba(0,0,0,.5))" width="20" height="20"><use href="#t-pct"/></svg>
<svg class="tab" style="position:absolute;left:205.5px;top:40px;filter:drop-shadow(0 -1px 0 rgba(0,0,0,.5))" width="20" height="20"><use href="#t-list"/></svg>
<svg class="tab" style="position:absolute;left:244.5px;top:40px;filter:drop-shadow(0 -1px 0 rgba(0,0,0,.5))" width="20" height="20"><use href="#t-note"/></svg>
<div class="sep" style="top:66px"></div>
<i class="tr-r" style="top:83px"></i><span class="lb h" style="top:81.1px">标题</span><div class="fld " style="top:77px">客户网站</div>
<div class="sep" style="top:102px"></div>
<i class="tr-r" style="top:120px"></i><span class="lb h" style="top:117.6px">工作</span><div class="fld " style="top:114px"></div>
<span class="lb" style="top:144.6px">持续期间</span><div class="fld " style="top:142px"></div>
<span class="lb" style="top:172.6px">里程碑</span><div style="position:absolute;left:90px;top:173px;width:12px;height:12px;border-radius:2.5px;background:#464b4f;border:1px solid #3d4245"></div>
<div class="sep" style="top:196px"></div>
<span class="lb" style="top:210.6px">开始</span><div class="fld selb" style="top:208px">最早<svg class="stp" width="6" height="11"><path d="M3 0.4 L5.7 4 H0.3 Z M3 10.6 L5.7 7 H0.3 Z" fill="#e4e4e4"/></svg></div>
<span class="lb" style="top:238.6px">最早</span><div class="fld " style="top:235px"><span style="letter-spacing:.22px">2017年10月5日 上午12:00</span><div style="position:absolute;right:0;top:0;width:19px;height:16px;border-left:1px solid #2c3033"></div><svg style="position:absolute;right:4.5px;top:2.5px" width="10" height="12"><path d="M1 3.2h7.6v7.6h-7.6z" fill="none" stroke="#e2e2e2" stroke-width="1.1"/><path d="M2.9 .8v2.6 M6.7 .8v2.6" stroke="#e2e2e2" stroke-width="1.1"/><path d="M2.6 5.2h1.7v3.6h-1.7z M5.3 5.2h1.7v3.6h-1.7z" fill="none" stroke="#e2e2e2" stroke-width=".8"/></svg></div>
<span class="lb" style="top:267.1px">结束</span><div class="fld selb" style="top:264px">不受限<svg class="stp" width="6" height="11"><path d="M3 0.4 L5.7 4 H0.3 Z M3 10.6 L5.7 7 H0.3 Z" fill="#e4e4e4"/></svg></div>
<span class="lb" style="top:295.1px">调度</span><div class="fld selb" style="top:292px">尽可能早<svg class="stp" width="6" height="11"><path d="M3 0.4 L5.7 4 H0.3 Z M3 10.6 L5.7 7 H0.3 Z" fill="#e4e4e4"/></svg></div>
<div class="sep" style="top:318px"></div>
<i class="tr-r" style="top:336px"></i><span class="lb h" style="top:332.8px">高级</span>
<div class="sep" style="top:356px"></div>
<i class="tr-d" style="top:375px"></i><span class="lb h" style="top:370.8px">预计的</span>
<span class="lb" style="top:398.6px">状态</span><span class="val" style="top:398.6px">将来</span>
<span class="lb" style="top:426.6px">开始</span><span class="val" style="top:426.6px">10月5, 2017 上午12:00</span>
<span class="lb" style="top:454.6px">结束</span><span class="val" style="top:454.6px">11月20, 2017 下午3:00</span>
<span class="lb" style="top:482.6px">工作</span><span class="val" style="top:482.6px">1.92 月</span>
<span class="lb" style="top:510.6px">持续期间</span><span class="val" style="top:510.6px">1.64 月 (1.55 e月)</span>
<span class="lb" style="top:538.6px">利用</span>
<svg style="position:absolute;left:80px;top:677px" width="40" height="38" id="hat"><g fill="#42474a" style="filter:drop-shadow(0 1px 0 rgba(255,255,255,.11))"><rect x="1" y="2.7" width="35.4" height="5.6" rx="1"/><rect x="3.1" y="10.6" width="33.3" height="5.1" rx="1"/><rect x="3.1" y="17.9" width="33.3" height="4.4" rx="1"/><ellipse cx="18.3" cy="29.4" rx="17.3" ry="6.5"/></g><ellipse cx="18.3" cy="28.8" rx="13.4" ry="3.7" fill="#4f5557"/><path d="M9.3 27 Q10.4 12 11.8 2.6 Q18 4.6 22.6 13 Q26.2 20 27.3 27 Q18.3 31.4 9.3 27Z" fill="none" stroke="#4f5557" stroke-width="3.4"/><path d="M9.3 27 Q10.4 12 11.8 2.6 Q18 4.6 22.6 13 Q26.2 20 27.3 27 Q18.3 31.4 9.3 27Z" fill="#4b5053" stroke="#3f4447" stroke-width="1.5"/></svg>
<span style="position:absolute;left:126.4px;top:685.3px;font-size:18.5px;font-weight:bold;color:#43484b;text-shadow:0 1px 0 rgba(255,255,255,.12);letter-spacing:-0.2px;line-height:22px;white-space:nowrap">Merlin Project</span>
</div>
</div>
</body></html>
